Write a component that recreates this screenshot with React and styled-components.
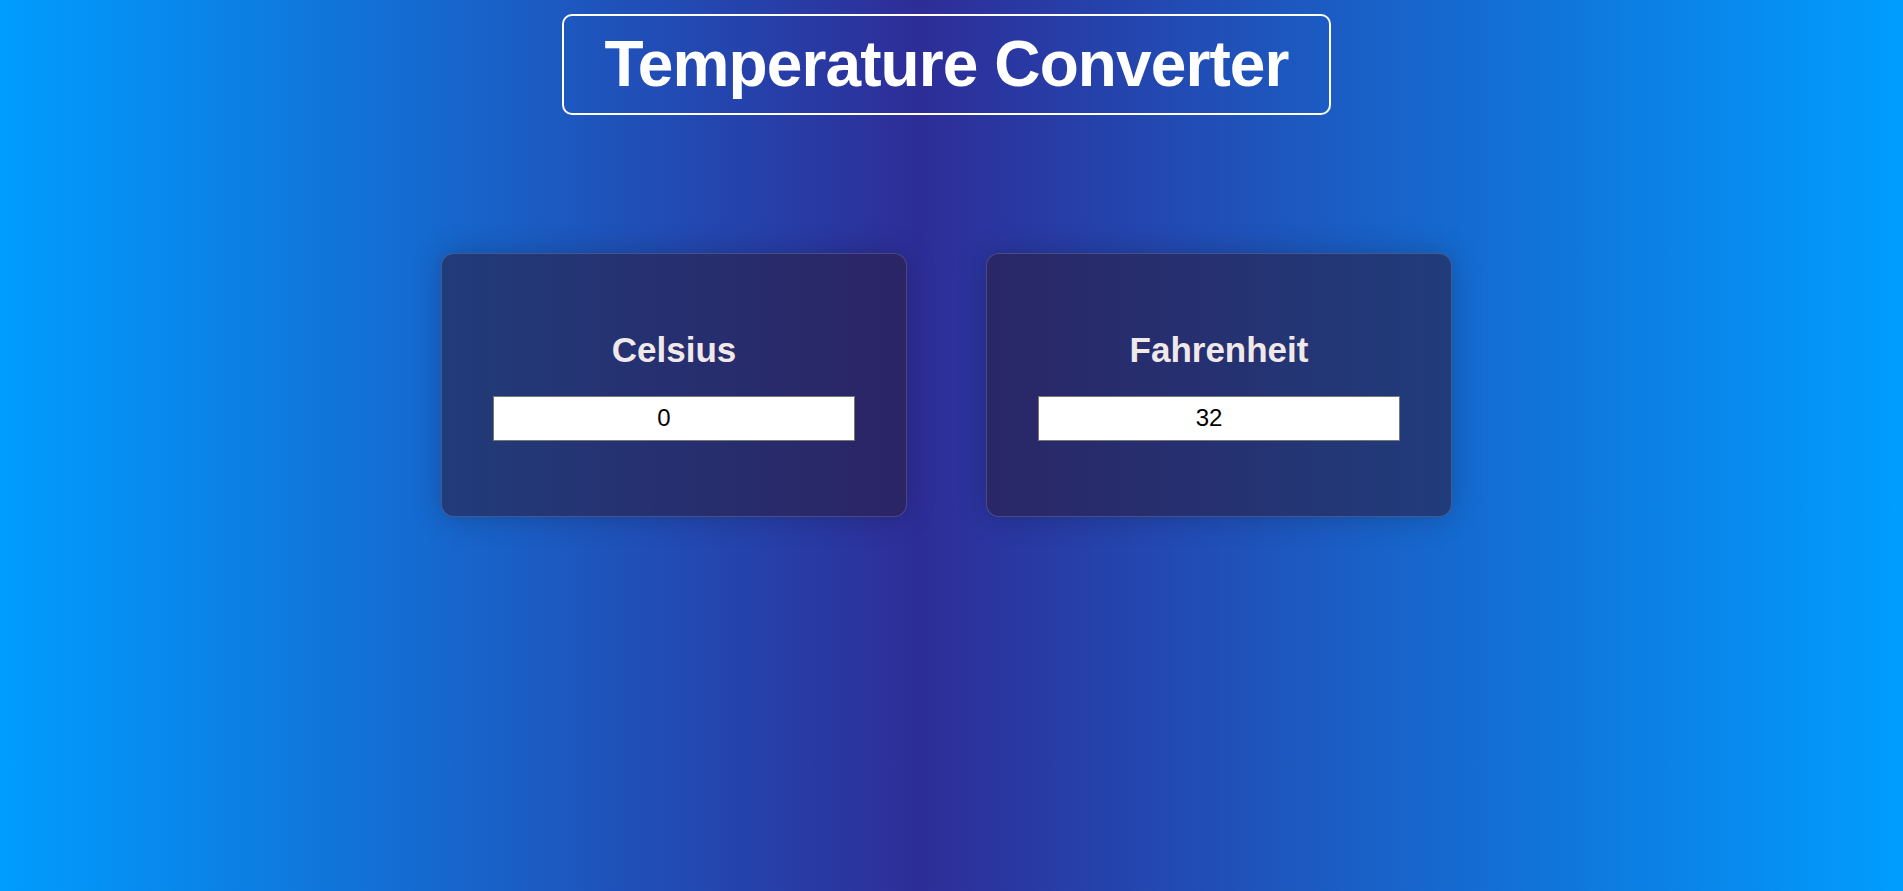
import React, { useState } from "react";
import styled, { createGlobalStyle } from "styled-components";

const GlobalStyle = createGlobalStyle`
  html, body {
    margin: 0;
    padding: 0;
  }
  body {
    font-family: "Liberation Sans", Arial, sans-serif;
  }
`;

const Page = styled.div`
  min-height: 100vh;
  box-sizing: border-box;
  padding: 14px 10px 0 0;
  display: flex;
  flex-direction: column;
  align-items: center;
  background: linear-gradient(to right, #009dff 0%, #2e2d98 48.3%, #009dff 100%);
`;

const TitleBox = styled.h1`
  margin: 0;
  padding: 0 40px;
  border: 2px solid #ffffff;
  border-radius: 10px;
  color: #ffffff;
  font-family: "Liberation Sans", Arial, sans-serif;
  font-weight: 700;
  font-size: 64px;
  line-height: 97px;
  letter-spacing: -0.9px;
  white-space: nowrap;
`;

const CardRow = styled.div`
  margin-top: 138px;
  display: flex;
  gap: 79px;
`;

const Card = styled.div`
  width: 466px;
  height: 264px;
  box-sizing: border-box;
  border: 1px solid rgba(255, 255, 255, 0.16);
  border-radius: 13px;
  background: rgba(42, 30, 66, 0.6);
  box-shadow: 0 0 30px rgba(0, 0, 0, 0.22);
  display: flex;
  flex-direction: column;
  align-items: center;
  justify-content: center;
  gap: 26px;
`;

const CardTitle = styled.h2`
  margin: 0;
  color: #f0e8e9;
  font-family: "Liberation Sans", Arial, sans-serif;
  font-weight: 700;
  font-size: 35px;
  line-height: 40px;
`;

const TempInput = styled.input`
  width: 362px;
  height: 45px;
  box-sizing: border-box;
  margin: 0;
  padding: 1px 7px 1px 2px;
  border: 1px solid #767676;
  border-radius: 0;
  background: #ffffff;
  color: #000000;
  font-family: "Liberation Sans", Arial, sans-serif;
  font-size: 24px;
  text-align: center;
  outline: none;
`;

export default function App() {
  const [celsius, setCelsius] = useState("0");
  const [fahrenheit, setFahrenheit] = useState("32");

  const onCelsius = (e) => {
    const v = e.target.value;
    setCelsius(v);
    const n = parseFloat(v);
    setFahrenheit(isNaN(n) ? "" : String(Math.round((n * 9) / 5 * 100 + 3200) / 100));
  };

  const onFahrenheit = (e) => {
    const v = e.target.value;
    setFahrenheit(v);
    const n = parseFloat(v);
    setCelsius(isNaN(n) ? "" : String(Math.round(((n - 32) * 5) / 9 * 100) / 100));
  };

  return (
    <>
      <GlobalStyle />
      <Page>
        <TitleBox>Temperature Converter</TitleBox>
        <CardRow>
          <Card>
            <CardTitle>Celsius</CardTitle>
            <TempInput type="number" value={celsius} onChange={onCelsius} />
          </Card>
          <Card>
            <CardTitle>Fahrenheit</CardTitle>
            <TempInput type="number" value={fahrenheit} onChange={onFahrenheit} />
          </Card>
        </CardRow>
      </Page>
    </>
  );
}
